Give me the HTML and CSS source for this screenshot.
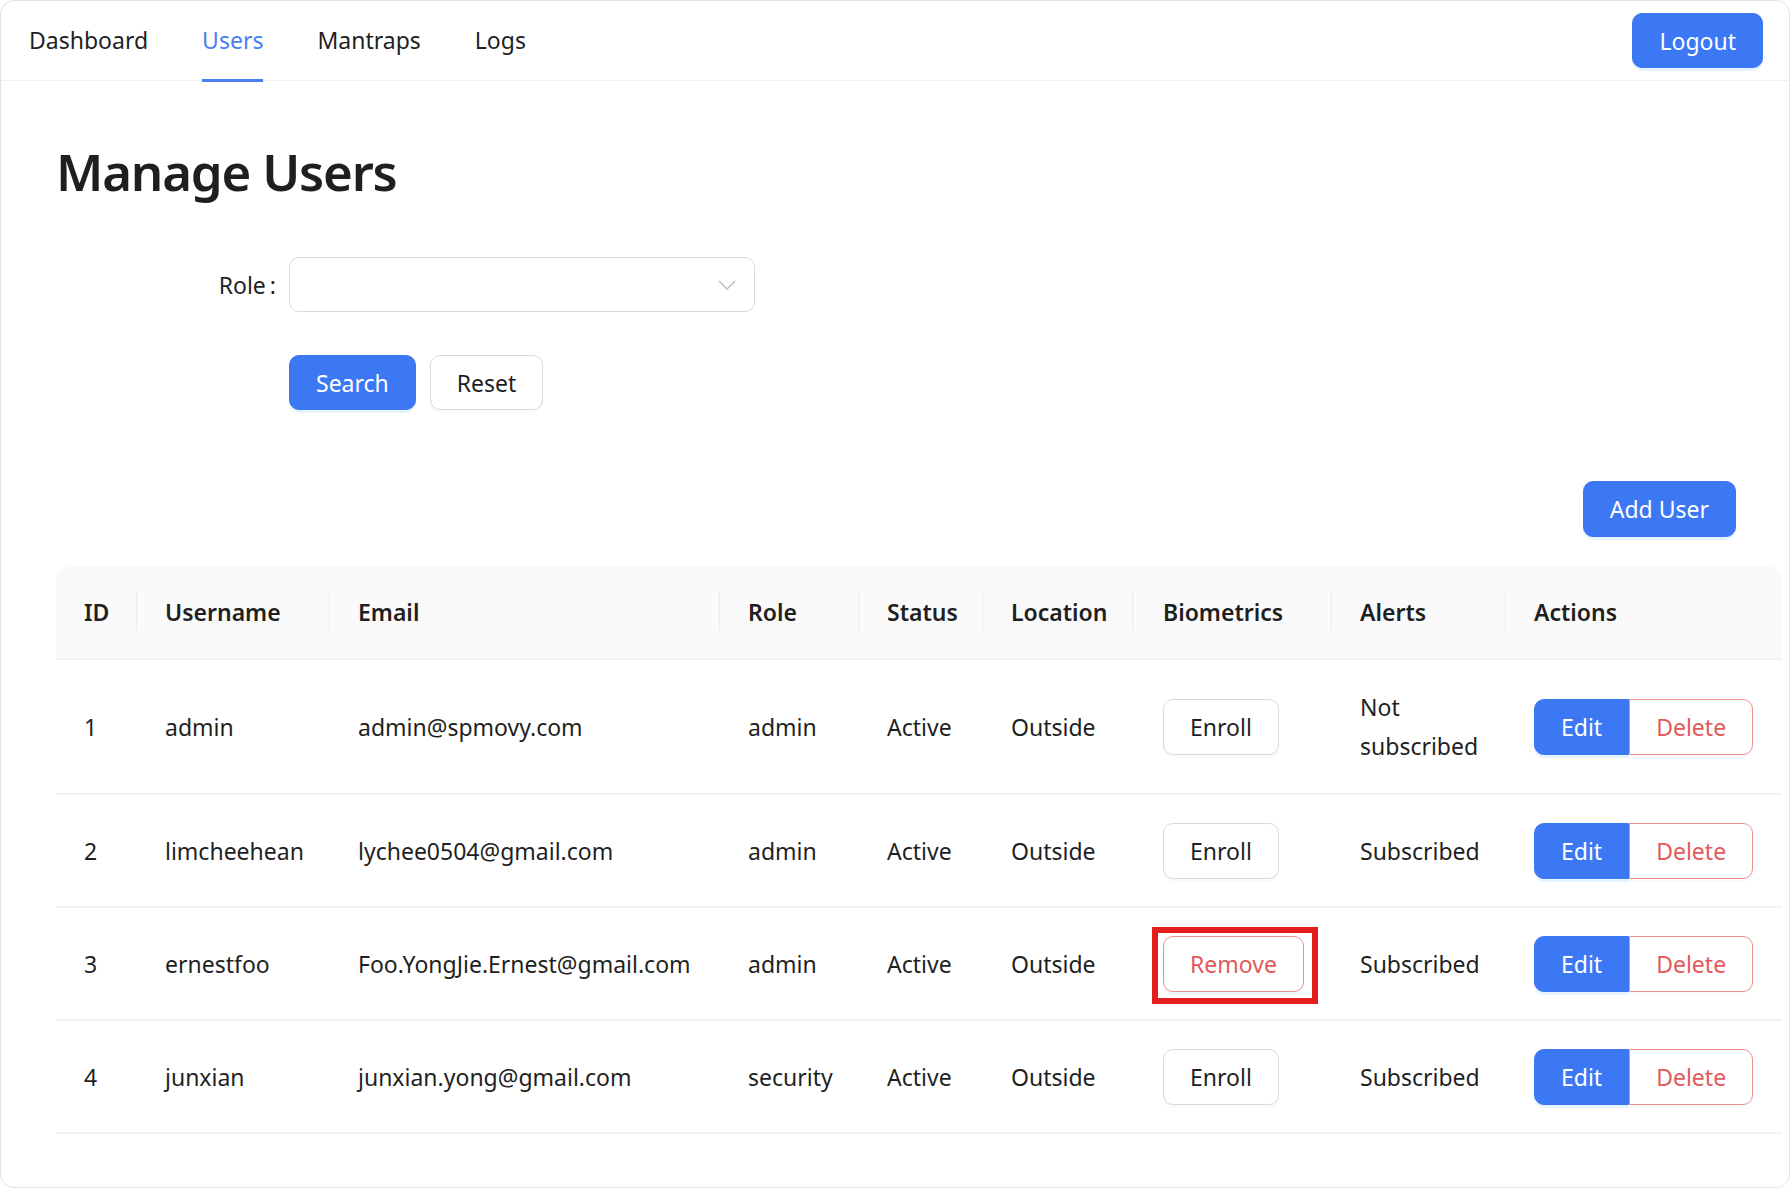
FILE: index.html
```html
<!DOCTYPE html>
<html lang="en">
<head>
<meta charset="utf-8">
<title>Manage Users</title>
<link rel="stylesheet" href="styles.css">
</head>
<body>
<div class="frame">
  <header class="topbar">
    <nav class="menu">
      <a class="menu-item">Dashboard</a>
      <a class="menu-item is-active">Users</a>
      <a class="menu-item">Mantraps</a>
      <a class="menu-item">Logs</a>
    </nav>
    <button class="btn btn-primary">Logout</button>
  </header>

  <main class="content">
    <h1 class="title">Manage Users</h1>

    <form class="filter">
      <div class="form-row">
        <label class="form-label">Role<span class="colon">:</span></label>
        <div class="select">
          <span class="select-value"></span>
          <svg class="select-arrow" width="18" height="10" viewBox="0 0 18 10"><path d="M1 1 L9 9 L17 1" fill="none" stroke="#bfbfbf" stroke-width="1.6"/></svg>
        </div>
      </div>
      <div class="form-actions">
        <button type="button" class="btn btn-primary">Search</button>
        <button type="button" class="btn btn-default">Reset</button>
      </div>
    </form>

    <div class="toolbar">
      <button class="btn btn-primary">Add User</button>
    </div>

    <table class="table">
      <colgroup>
        <col class="c-id"><col class="c-user"><col class="c-email"><col class="c-role"><col class="c-status"><col class="c-loc"><col class="c-bio"><col class="c-alert"><col class="c-act">
      </colgroup>
      <thead>
        <tr>
          <th>ID</th><th>Username</th><th>Email</th><th>Role</th><th>Status</th><th>Location</th><th>Biometrics</th><th>Alerts</th><th>Actions</th>
        </tr>
      </thead>
      <tbody>
        <tr>
          <td>1</td><td>admin</td><td>admin@spmovy.com</td><td>admin</td><td>Active</td><td>Outside</td>
          <td><button class="btn btn-default">Enroll</button></td>
          <td>Not<br>subscribed</td>
          <td><div class="btn-group"><button class="btn btn-primary">Edit</button><button class="btn btn-danger">Delete</button></div></td>
        </tr>
        <tr>
          <td>2</td><td>limcheehean</td><td>lychee0504@gmail.com</td><td>admin</td><td>Active</td><td>Outside</td>
          <td><button class="btn btn-default">Enroll</button></td>
          <td>Subscribed</td>
          <td><div class="btn-group"><button class="btn btn-primary">Edit</button><button class="btn btn-danger">Delete</button></div></td>
        </tr>
        <tr>
          <td>3</td><td>ernestfoo</td><td>Foo.YongJie.Ernest@gmail.com</td><td>admin</td><td>Active</td><td>Outside</td>
          <td><span class="highlight"><button class="btn btn-danger">Remove</button></span></td>
          <td>Subscribed</td>
          <td><div class="btn-group"><button class="btn btn-primary">Edit</button><button class="btn btn-danger">Delete</button></div></td>
        </tr>
        <tr>
          <td>4</td><td>junxian</td><td>junxian.yong@gmail.com</td><td>security</td><td>Active</td><td>Outside</td>
          <td><button class="btn btn-default">Enroll</button></td>
          <td>Subscribed</td>
          <td><div class="btn-group"><button class="btn btn-primary">Edit</button><button class="btn btn-danger">Delete</button></div></td>
        </tr>
      </tbody>
    </table>
  </main>
</div>
</body>
</html>
```

FILE: styles.css
```css
* { box-sizing: border-box; }

html, body {
  margin: 0;
  padding: 0;
  background: #ffffff;
  overflow: hidden;
}

body {
  font-family: "Noto Sans", "Open Sans", "Liberation Sans", sans-serif;
  font-size: 23px;
  color: #1f1f1f;
}

.frame {
  width: 1790px;
  height: 1188px;
  border: 1px solid #e3e3e3;
  border-radius: 14px;
  overflow: hidden;
  background: #fff;
}

/* ---------- top bar ---------- */
.topbar {
  height: 80px;
  border-bottom: 1px solid #f0f0f0;
  display: flex;
  align-items: center;
  justify-content: space-between;
  padding-right: 26px;
}

.menu {
  display: flex;
  height: 79px;
  align-self: flex-start;
}

.menu-item {
  position: relative;
  padding: 0 27px;
  line-height: 79px;
  color: #1f1f1f;
  font-size: 23px;
  cursor: pointer;
}

.menu-item:first-child {
  padding-left: 28px;
}

.menu-item.is-active {
  color: #4a7ff0;
}

.menu-item.is-active::after {
  content: "";
  position: absolute;
  left: 27px;
  right: 27px;
  bottom: -2px;
  height: 3px;
  background: #4a7ff0;
}

/* ---------- buttons ---------- */
.btn {
  font-family: inherit;
  font-size: 23px;
  height: 55px;
  padding: 0 26px;
  border-radius: 10px;
  border: 1px solid #d9d9d9;
  background: #fff;
  color: #1f1f1f;
  cursor: pointer;
  box-shadow: 0 3px 0 rgba(0, 0, 0, 0.02);
  white-space: nowrap;
}

.btn-primary {
  background: #3c78f4;
  border-color: #3c78f4;
  color: #fff;
  box-shadow: 0 3px 0 rgba(5, 145, 255, 0.1);
}

.btn-danger {
  color: #e25a5a;
  border-color: #ee8f8f;
  background: #fff;
}

.highlight {
  display: inline-block;
  margin: -9px -14px -12px -11px;
  padding: 3px 8px 6px 5px;
  border: 6px solid #e41d1d;
  line-height: 0;
}

.btn-group {
  display: flex;
}

.btn-group .btn:first-child {
  border-radius: 10px 0 0 10px;
}

.btn-group .btn:last-child {
  border-radius: 0 10px 10px 0;
}

/* ---------- content ---------- */
.content {
  padding-left: 55px;
  width: 1781px;
}

.title {
  margin: 56px 0 0;
  font-size: 51px;
  line-height: 68px;
  font-weight: 600;
  letter-spacing: -1.2px;
  color: #1f1f1f;
}

.filter {
  margin-top: 52px;
}

.form-row {
  display: flex;
  align-items: center;
  margin-bottom: 43px;
}

.form-label {
  width: 233px;
  text-align: right;
  padding-right: 13px;
  font-size: 23px;
  color: #1f1f1f;
}

.colon {
  margin-left: 4px;
}

.select {
  width: 466px;
  height: 55px;
  border: 1px solid #d9d9d9;
  border-radius: 10px;
  display: flex;
  align-items: center;
  justify-content: space-between;
  padding: 0 18px 0 20px;
}

.form-actions {
  display: flex;
  gap: 14px;
  padding-left: 233px;
}

.toolbar {
  display: flex;
  justify-content: flex-end;
  padding-right: 46px;
  margin-top: 71px;
}

.toolbar .btn {
  height: 56px;
}

/* ---------- table ---------- */
.table {
  margin-top: 29px;
  width: 1726px;
  table-layout: fixed;
  border-collapse: separate;
  border-spacing: 0;
}

.c-id { width: 80px; }
.c-user { width: 193px; }
.c-email { width: 390px; }
.c-role { width: 139px; }
.c-status { width: 124px; }
.c-loc { width: 150px; }
.c-bio { width: 199px; }
.c-alert { width: 174px; }
.c-act { width: 277px; }

.table th,
.table td {
  text-align: left;
  border-bottom: 2px solid #f2f2f2;
  white-space: nowrap;
  vertical-align: middle;
}

.table th {
  position: relative;
  padding: 27px 0 27px 29px;
  line-height: 38px;
  background: #fafafa;
  font-weight: 600;
  color: #1f1f1f;
}

.table td {
  padding: 28px 0 27px 29px;
  line-height: 39px;
}

.table th:first-child,
.table td:first-child {
  padding-left: 28px;
}

.table th:nth-child(7),
.table td:nth-child(7) {
  padding-left: 31px;
}

.table th:first-child { border-top-left-radius: 14px; }
.table th:last-child { border-top-right-radius: 14px; }

.table th + th::before {
  content: "";
  position: absolute;
  left: 0;
  top: 50%;
  width: 1px;
  height: 39px;
  margin-top: -20px;
  background: #ececec;
}

.table td .btn {
  height: 56px;
}
```
